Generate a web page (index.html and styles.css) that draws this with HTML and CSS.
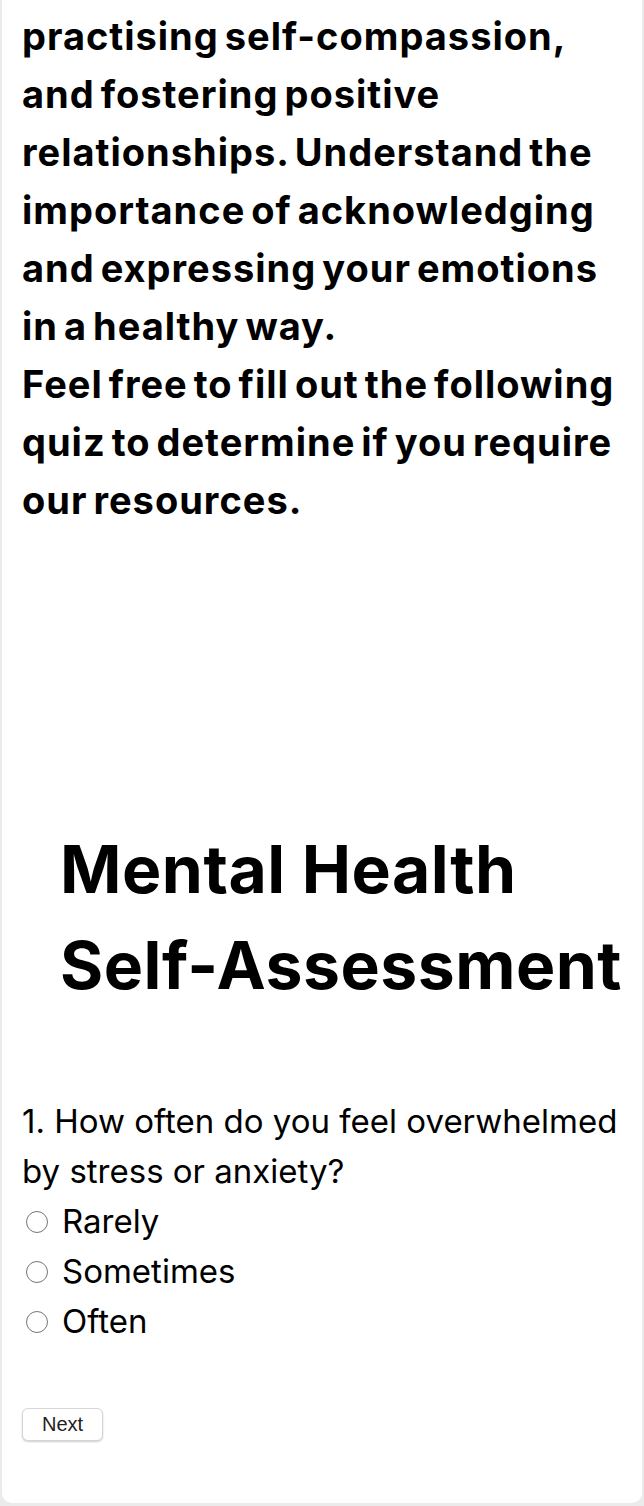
FILE: index.html
```html
<!DOCTYPE html>
<html lang="en">
<head>
<meta charset="utf-8">
<title>Mental Health Self-Assessment</title>
<link rel="stylesheet" href="styles.css">
</head>
<body>
<main class="card">
  <section class="intro">
    <p class="lead">Looking after yourself means practising self-compassion, and fostering positive relationships. Understand the importance of acknowledging and expressing your emotions in a healthy way.<br>Feel free to fill out the following quiz to determine if you require our resources.</p>
  </section>
  <section class="quiz">
    <h1 class="quiz-title">Mental Health Self-Assessment</h1>
    <form class="question">
      <p class="question-text">1. How often do you feel overwhelmed by stress or anxiety?</p>
      <label class="option"><input type="radio" name="q1" value="rarely"> Rarely</label>
      <label class="option"><input type="radio" name="q1" value="sometimes"> Sometimes</label>
      <label class="option"><input type="radio" name="q1" value="often"> Often</label>
    </form>
    <button class="next-btn" type="button">Next</button>
  </section>
</main>
</body>
</html>
```
FILE: styles.css
```css
html, body {
  margin: 0;
  padding: 0;
}
body {
  background: #ebebeb;
  font-family: "Inter", "Open Sans", sans-serif;
  color: #000;
}
.card {
  background: #fff;
  margin: -51px 2px 2px 2px;
  border-radius: 10px;
  padding: 0 20px 62px 20px;
  overflow: hidden;
}
.lead {
  margin: 0;
  font-size: 38px;
  font-weight: 700;
  line-height: 58px;
  letter-spacing: 1px;
  word-spacing: -4px;
}
.quiz {
  padding-top: 292px;
}
.quiz-title {
  margin: 0 -16px 83px 38px;
  font-size: 66px;
  font-weight: 700;
  line-height: 96px;
  letter-spacing: 0.5px;
}
.question {
  display: flex;
  flex-direction: column;
}
.question-text {
  margin: 0;
  font-size: 33px;
  line-height: 50px;
}
.option {
  display: flex;
  align-items: center;
  gap: 14px;
  font-size: 33px;
  line-height: 50px;
  padding-left: 4px;
}
.option input {
  width: 22px;
  height: 22px;
  margin: 2px 0 0 0;
}
.next-btn {
  margin-top: 62px;
  font-family: "Liberation Sans", Arial, sans-serif;
  font-size: 20px;
  padding: 4px 19px;
  background: #fff;
  color: #222;
  border: 1px solid #d6d6d6;
  border-radius: 6px;
  box-shadow: 0 1px 2px rgba(0,0,0,0.2);
}
```
